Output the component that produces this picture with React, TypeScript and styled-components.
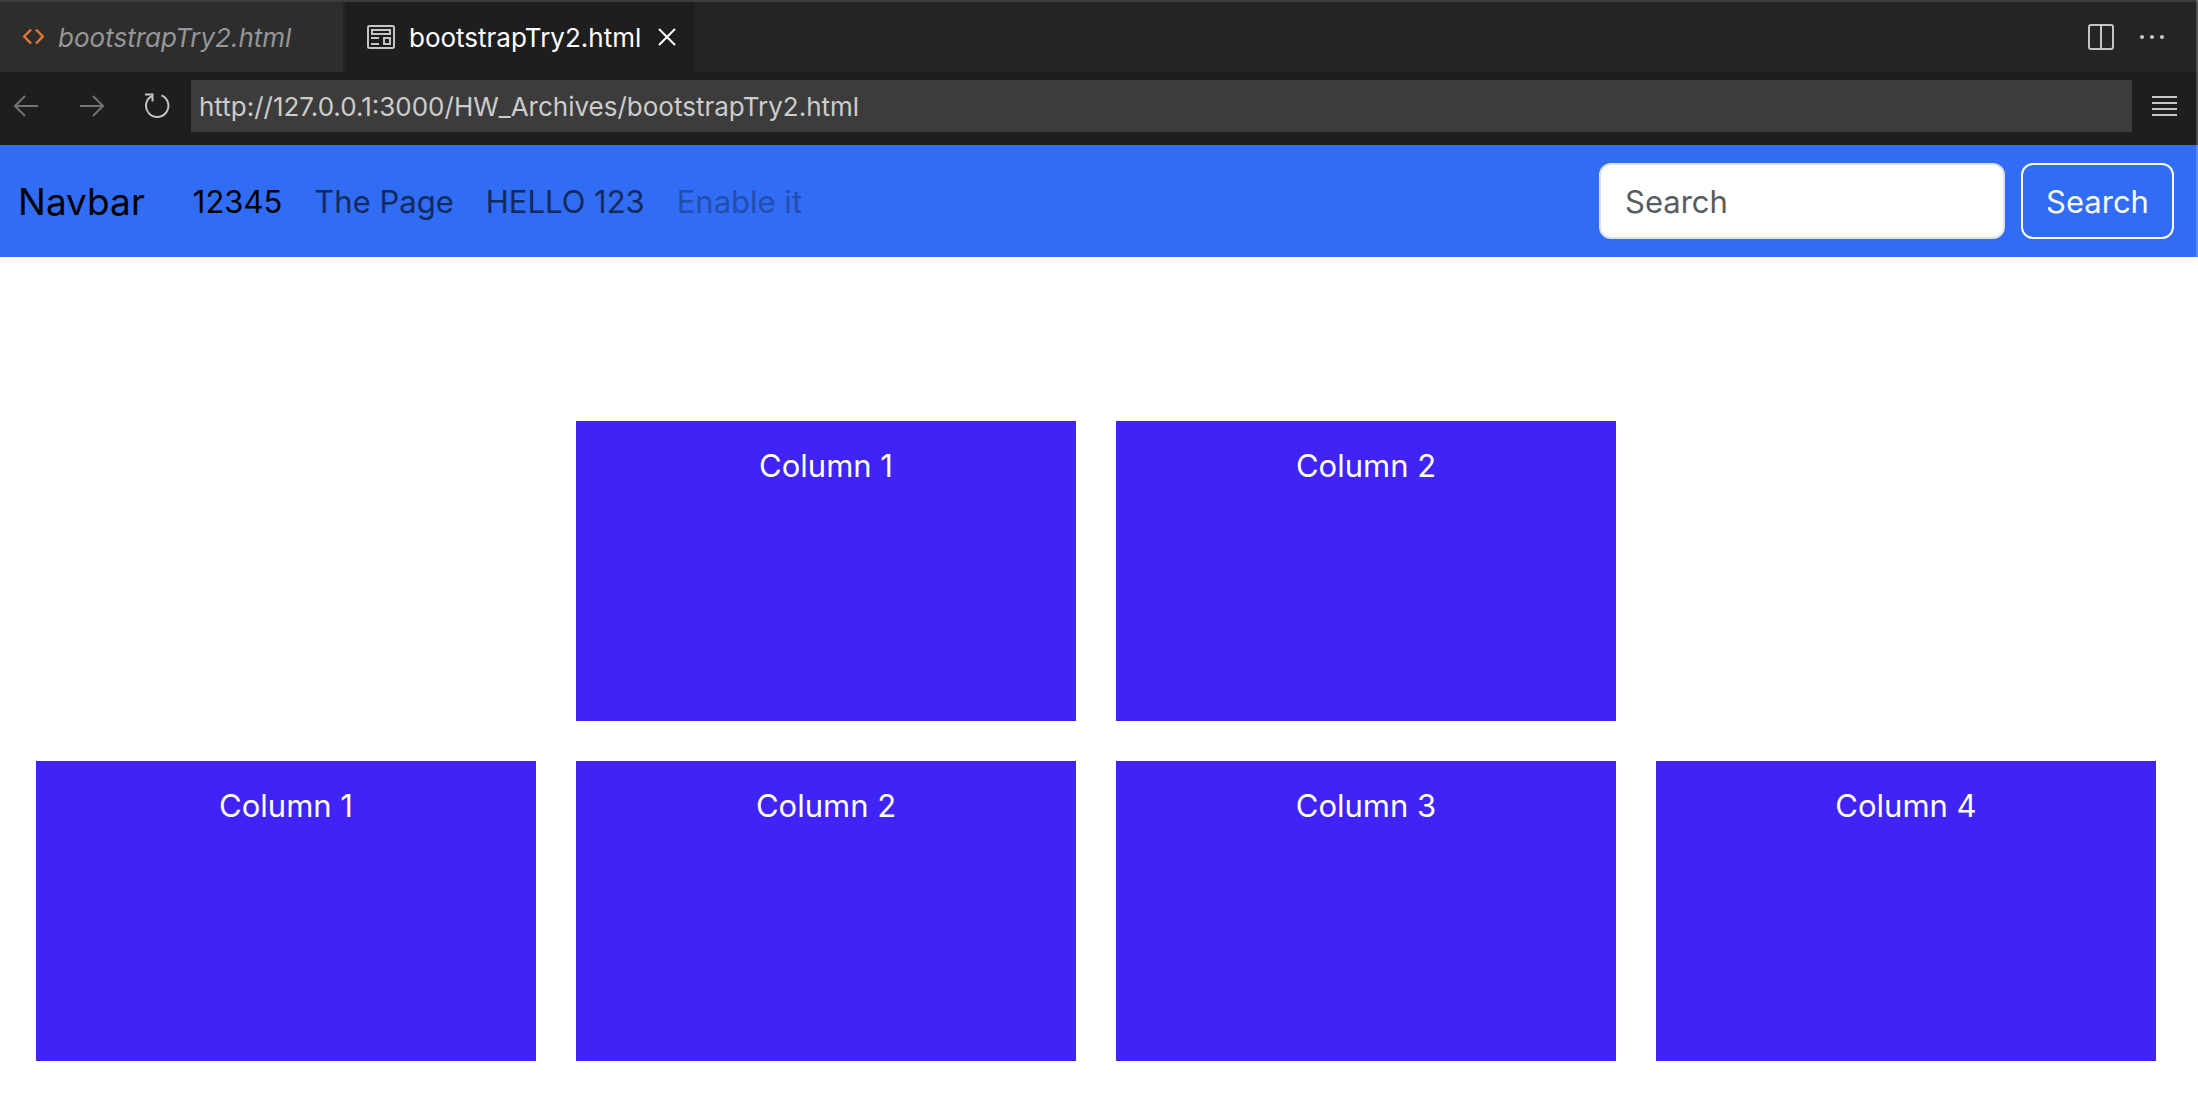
import React from "react";
import styled, { createGlobalStyle } from "styled-components";

const GlobalStyle = createGlobalStyle`
  *, *::before, *::after { box-sizing: border-box; }
  body {
    margin: 0;
    background: #ffffff;
    font-family: Inter, "Liberation Sans", sans-serif;
  }
  button, input { font-family: inherit; }
  svg { flex: none; }
`;

const Window = styled.div`
  position: relative;
  min-height: 100vh;
`;

const WindowEdge = styled.div`
  position: absolute;
  top: 0;
  right: 0;
  width: 2px;
  height: 257px;
  background: rgba(255, 255, 255, 0.2);
`;

const TabBar = styled.div`
  display: flex;
  height: 72px;
  border-top: 2px solid #3c3c3c;
  background: #252526;
`;

const Tab = styled.div<{ $active?: boolean }>`
  display: flex;
  align-items: center;
  gap: 14px;
  width: ${(p) => (p.$active ? 350 : 345)}px;
  padding: 0 16px 0 22px;
  background: ${(p) => (p.$active ? "#1e1e1e" : "#2d2d2d")};
  border-right: ${(p) => (p.$active ? "none" : "2px solid #252526")};
`;

const TabTitle = styled.button<{ $active?: boolean }>`
  padding: 2px 0 0;
  border: 0;
  background: none;
  font-size: 26px;
  line-height: 32px;
  white-space: nowrap;
  font-style: ${(p) => (p.$active ? "normal" : "italic")};
  color: ${(p) => (p.$active ? "#ffffff" : "#969696")};
`;

const TabActions = styled.div`
  display: flex;
  align-items: center;
  gap: 19px;
  margin-left: auto;
  padding-right: 30px;
`;

const IconButton = styled.button`
  display: flex;
  align-items: center;
  justify-content: center;
  flex: none;
  width: 32px;
  height: 32px;
  padding: 0;
  border: 0;
  background: none;
  color: #c5c5c5;
  &:disabled { color: #737373; }
`;

const CloseButton = styled(IconButton)`
  width: 24px;
  margin-left: auto;
  color: #ffffff;
`;

const AddressBar = styled.div`
  display: flex;
  align-items: center;
  height: 73px;
  padding: 8px 17px 13px 10px;
  background: #1e1e1e;
`;

const HistoryButtons = styled.div`
  display: flex;
  align-items: center;
  gap: 34px;
  margin-right: 17px;
`;

const AddressInput = styled.input`
  flex: 1;
  min-width: 0;
  height: 52px;
  margin-right: 17px;
  padding: 0 8px;
  border: 0;
  background: #3c3c3c;
  color: #cccccc;
  font-size: 26px;
`;

const Navbar = styled.nav`
  display: flex;
  align-items: center;
  height: 112px;
  padding: 0 24px 0 18px;
  background: #316cf4;
  font-size: 31px;
  line-height: 48px;
`;

const Brand = styled.a`
  margin-right: 48px;
  padding-top: 2px;
  font-size: 37px;
  color: #000000;
  text-decoration: none;
`;

const NavList = styled.ul`
  display: flex;
  gap: 32px;
  margin: 0;
  padding: 2px 0 0;
  list-style: none;
`;

const NavLink = styled.a<{ $tone: string }>`
  color: ${(p) => p.$tone};
  text-decoration: none;
  white-space: nowrap;
`;

const SearchForm = styled.form`
  display: flex;
  gap: 16px;
  margin-left: auto;
`;

const SearchInput = styled.input`
  width: 406px;
  height: 76px;
  padding: 0 24px;
  border: 2px solid #dee2e6;
  border-radius: 12px;
  background: #ffffff;
  font-size: 31px;
  &::placeholder { color: #595c5f; opacity: 1; }
`;

const SearchButton = styled.button`
  width: 153px;
  height: 76px;
  padding: 0;
  border: 2px solid #f8f9fa;
  border-radius: 12px;
  background: transparent;
  color: #f8f9fa;
  font-size: 31px;
`;

const Grid = styled.main`
  display: grid;
  grid-template-columns: repeat(4, 1fr);
  gap: 40px;
  padding: 164px 42px 56px 36px;
`;

const Box = styled.section<{ $start?: number }>`
  grid-column-start: ${(p) => p.$start ?? "auto"};
  height: 300px;
  padding-top: 21px;
  background: #4023f5;
  color: #ffffff;
  font-size: 31px;
  line-height: 48px;
  text-align: center;
`;

const CodeIcon = () => (
  <svg width="22" height="20" viewBox="0 0 22 20" fill="none" stroke="#e37933" strokeWidth="2.4" aria-hidden="true">
    <path d="M9 2.5 2.2 9.5 9 16.5M14 2.5 20.8 9.5 14 16.5" />
  </svg>
);

const PreviewIcon = () => (
  <svg width="28" height="24" viewBox="0 0 28 24" fill="none" stroke="#c5c5c5" strokeWidth="2" aria-hidden="true">
    <rect x="1" y="1" width="26" height="22" rx="1.5" />
    <path d="M5 5H23V9H5ZM17 13H23V19H17ZM4 13H12M4 19H12" />
  </svg>
);

const CloseIcon = () => (
  <svg width="18" height="18" viewBox="0 0 18 18" fill="none" stroke="currentColor" strokeWidth="2" aria-hidden="true">
    <path d="M1 1 17 17M17 1 1 17" />
  </svg>
);

const SplitIcon = () => (
  <svg width="26" height="26" viewBox="0 0 26 26" fill="none" stroke="currentColor" strokeWidth="2" aria-hidden="true">
    <rect x="1" y="1" width="24" height="24" rx="2" />
    <path d="M13 1V25" />
  </svg>
);

const MoreIcon = () => (
  <svg width="26" height="6" viewBox="0 0 26 6" fill="currentColor" aria-hidden="true">
    <circle cx="3" cy="3" r="2.1" />
    <circle cx="13" cy="3" r="2.1" />
    <circle cx="23" cy="3" r="2.1" />
  </svg>
);

const BackIcon = () => (
  <svg width="26" height="22" viewBox="0 0 26 22" fill="none" stroke="currentColor" strokeWidth="2" aria-hidden="true">
    <path d="M25 11H2M12 1 2 11 12 21" />
  </svg>
);

const ForwardIcon = () => (
  <svg width="26" height="22" viewBox="0 0 26 22" fill="none" stroke="currentColor" strokeWidth="2" aria-hidden="true">
    <path d="M1 11H24M14 1 24 11 14 21" />
  </svg>
);

const ReloadIcon = () => (
  <svg width="26" height="26" viewBox="0 0 26 26" fill="none" stroke="currentColor" strokeWidth="2" aria-hidden="true">
    <path d="M16.4 2.4A11.2 11.2 0 1 1 6.6 3.1" />
    <path d="M0 1.5H7.5V8.5" />
  </svg>
);

const MenuIcon = () => (
  <svg width="26" height="20" viewBox="0 0 26 20" fill="none" stroke="currentColor" strokeWidth="2" aria-hidden="true">
    <path d="M0 1H25M0 7H25M0 13H25M0 19H25" />
  </svg>
);

const links = [
  { label: "12345", tone: "#000000" },
  { label: "The Page", tone: "#132a5e" },
  { label: "HELLO 123", tone: "#132a5e" },
  { label: "Enable it", tone: "#234daf" },
];

const boxes = [
  { label: "Column 1", start: 2 },
  { label: "Column 2", start: 3 },
  { label: "Column 1", start: 1 },
  { label: "Column 2" },
  { label: "Column 3" },
  { label: "Column 4" },
];

export default function App() {
  return (
    <Window>
      <GlobalStyle />
      <TabBar>
        <Tab>
          <CodeIcon />
          <TabTitle>bootstrapTry2.html</TabTitle>
        </Tab>
        <Tab $active>
          <PreviewIcon />
          <TabTitle $active>bootstrapTry2.html</TabTitle>
          <CloseButton aria-label="Close tab"><CloseIcon /></CloseButton>
        </Tab>
        <TabActions>
          <IconButton aria-label="Split editor"><SplitIcon /></IconButton>
          <IconButton aria-label="More actions"><MoreIcon /></IconButton>
        </TabActions>
      </TabBar>
      <AddressBar>
        <HistoryButtons>
          <IconButton aria-label="Back" disabled><BackIcon /></IconButton>
          <IconButton aria-label="Forward" disabled><ForwardIcon /></IconButton>
          <IconButton aria-label="Reload"><ReloadIcon /></IconButton>
        </HistoryButtons>
        <AddressInput aria-label="Address" defaultValue="http://127.0.0.1:3000/HW_Archives/bootstrapTry2.html" />
        <IconButton aria-label="Menu"><MenuIcon /></IconButton>
      </AddressBar>
      <Navbar>
        <Brand href="#">Navbar</Brand>
        <NavList>
          {links.map((link) => (
            <li key={link.label}>
              <NavLink href="#" $tone={link.tone}>{link.label}</NavLink>
            </li>
          ))}
        </NavList>
        <SearchForm>
          <SearchInput type="search" placeholder="Search" aria-label="Search" />
          <SearchButton type="button">Search</SearchButton>
        </SearchForm>
      </Navbar>
      <Grid>
        {boxes.map((box, i) => (
          <Box key={i} $start={box.start}>{box.label}</Box>
        ))}
      </Grid>
      <WindowEdge />
    </Window>
  );
}
